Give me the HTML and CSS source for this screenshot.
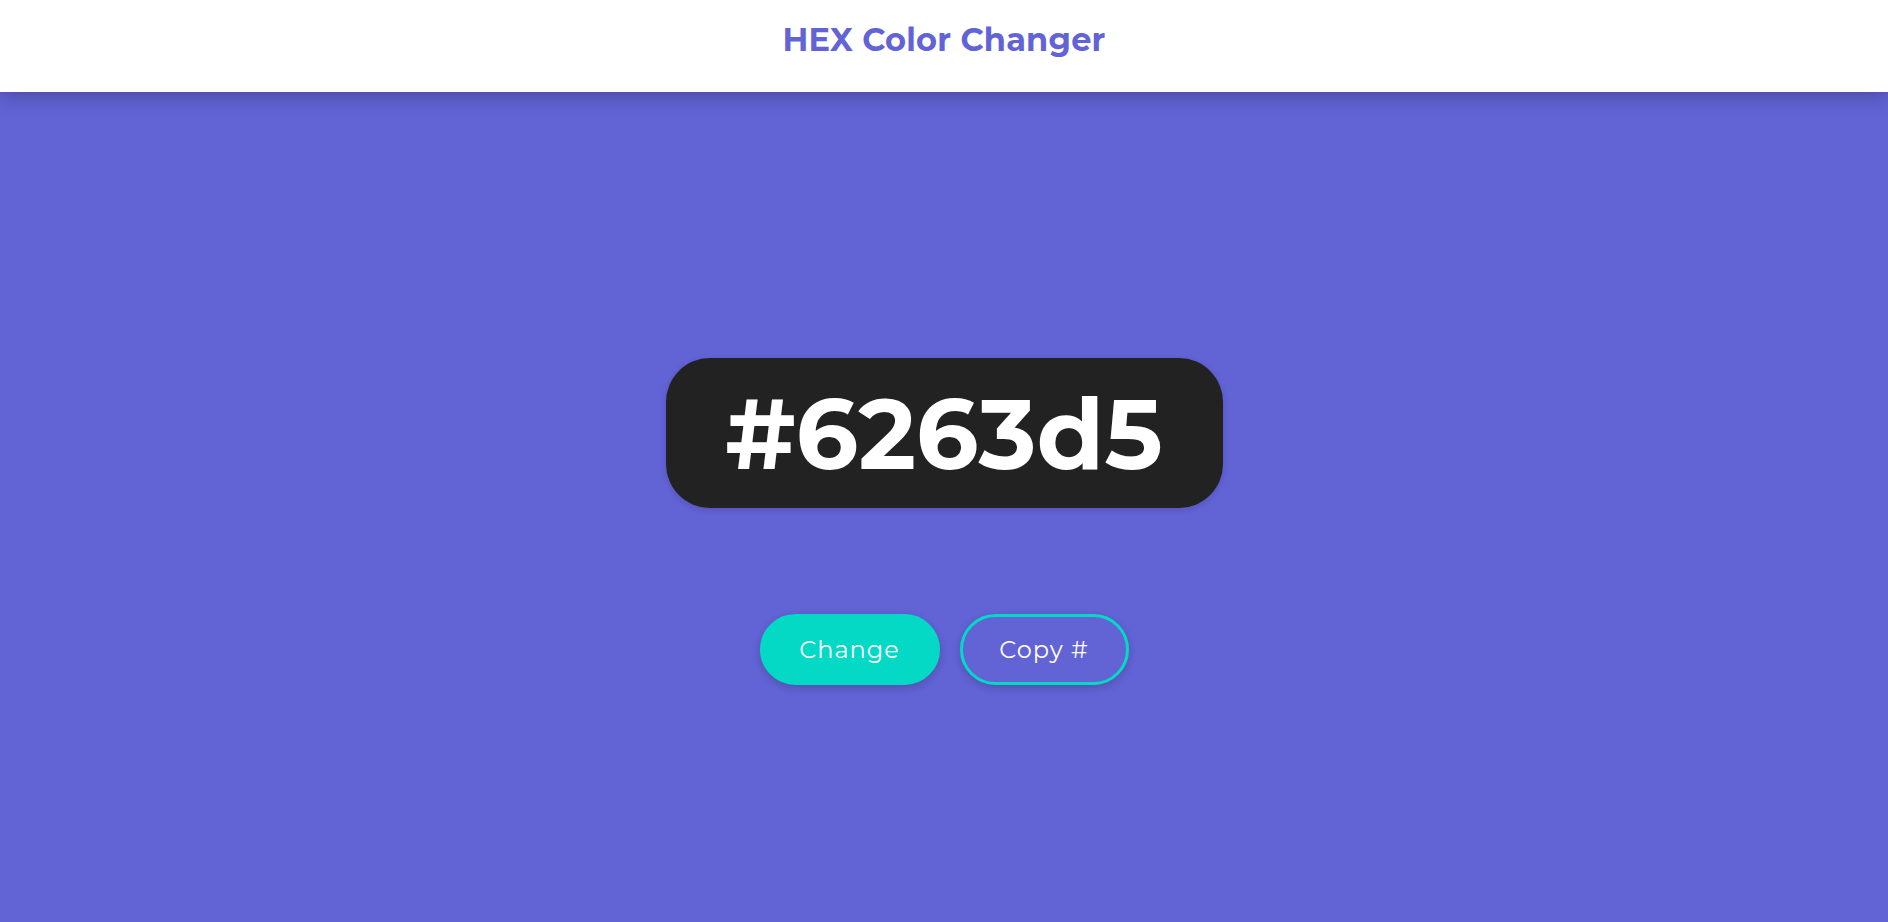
FILE: index.html
```html
<!DOCTYPE html>
<html lang="en">
<head>
<meta charset="utf-8">
<title>HEX Color Changer</title>
<link rel="stylesheet" href="styles.css">
</head>
<body>
<header class="topbar">
  <h1 class="title">HEX Color Changer</h1>
</header>
<main class="stage">
  <div class="hex-box"><span class="hex-text">#6263d5</span></div>
  <div class="actions">
    <button class="btn btn-fill">Change</button>
    <button class="btn btn-outline">Copy #</button>
  </div>
</main>
</body>
</html>
```

FILE: styles.css
```css
* { box-sizing: border-box; }
html, body { margin: 0; height: 100%; }
body {
  background: #6263d5;
  font-family: "Montserrat", Inter, "DejaVu Sans", sans-serif;
  overflow: hidden;
}
.topbar {
  height: 92px;
  background: #ffffff;
  display: flex;
  align-items: center;
  justify-content: center;
  padding-bottom: 12px;
  box-shadow: 0 3px 18px rgba(0, 0, 0, 0.28);
  position: relative;
  z-index: 1;
}
.title {
  margin: 0;
  font-size: 32px;
  font-weight: 700;
  color: #6263d5;
  letter-spacing: 0.2px;
  line-height: 1;
}
.stage {
  display: flex;
  flex-direction: column;
  align-items: center;
  padding-top: 266px;
}
.hex-box {
  width: 557px;
  height: 150px;
  background: #222222;
  border-radius: 44px;
  display: flex;
  align-items: center;
  justify-content: center;
  box-shadow: 0 2px 6px rgba(0, 0, 0, 0.15);
}
.hex-text {
  color: #ffffff;
  font-size: 98px;
  font-weight: 700;
  line-height: 1;
  letter-spacing: 0;
  padding-top: 2px;
}
.actions {
  display: flex;
  gap: 20px;
  margin-top: 106px;
}
.btn {
  height: 71px;
  border-radius: 36px;
  font-family: inherit;
  font-size: 24px;
  font-weight: 400;
  color: #ffffff;
  letter-spacing: 1px;
  cursor: pointer;
  box-shadow: 0 3px 8px rgba(0, 0, 0, 0.18);
}
.btn-fill {
  width: 180px;
  background: #03d9c5;
  border: 3px solid #03d9c5;
}
.btn-outline {
  width: 169px;
  background: transparent;
  border: 3px solid #03d9c5;
}
```
